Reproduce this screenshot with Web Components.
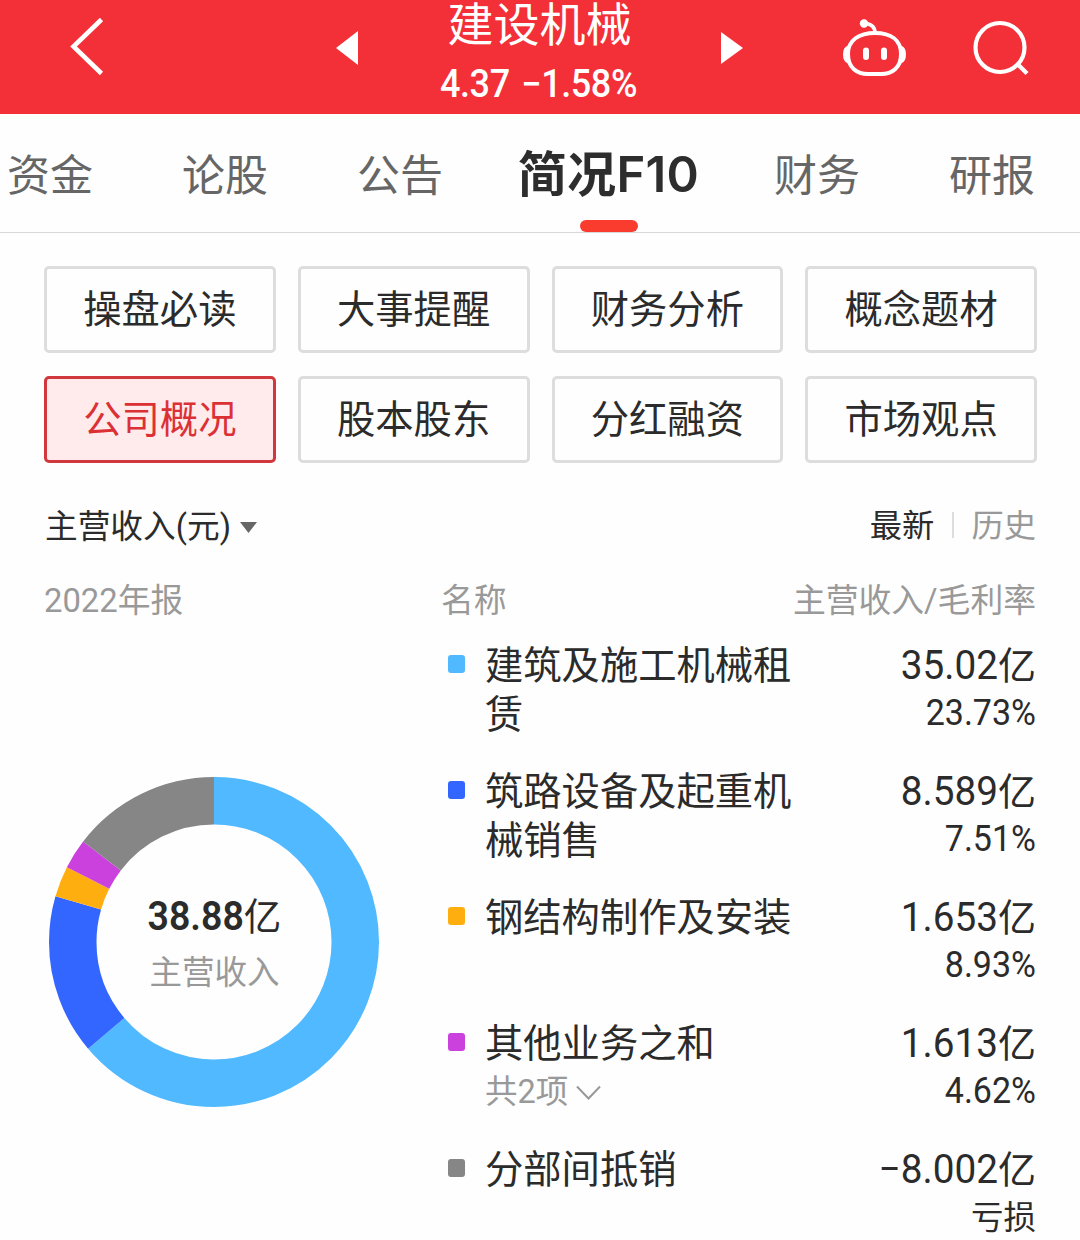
<!DOCTYPE html>
<html lang="zh-CN">
<head>
<meta charset="utf-8">
<title>建设机械 简况F10</title>
<style>
body {
  margin: 0;
  width: 1080px;
  height: 1240px;
  overflow: hidden;
  background: #fefefe;
  color: #2b2b2b;
  font-family: Roboto, "Noto Sans CJK SC", sans-serif;
}
</style>
</head>
<body>
<stock-page></stock-page>

<script>
const segments = [
  { name: "建筑及施工机械租赁", value: 35.02, amount: "35.02", ratio: "23.73%", color: "#51b9ff" },
  { name: "筑路设备及起重机械销售", value: 8.589, amount: "8.589", ratio: "7.51%", color: "#3366ff" },
  { name: "钢结构制作及安装", value: 1.653, amount: "1.653", ratio: "8.93%", color: "#ffae10" },
  { name: "其他业务之和", value: 1.613, amount: "1.613", ratio: "4.62%", color: "#cb41dd", more: "共2项" },
  { name: "分部间抵销", value: 8.002, amount: "−8.002", ratio: "亏损", color: "#868686" },
];

class BaseElement extends HTMLElement {
  constructor() {
    super();
    this.attachShadow({ mode: "open" });
  }

  connectedCallback() {
    this.shadowRoot.innerHTML = this.template();
  }
}

// 顶部标题栏
class StockHeader extends BaseElement {
  template() {
    return `
<style>
:host {
  display: grid;
  grid-template-columns: 336px 407px 337px;
  height: 114px;
  background: #f33038;
  color: #fff;
}
svg {
  display: block;
  fill: none;
  stroke: #fff;
}
.left { padding: 16px 0 0 68px; }
.center {
  display: flex;
  justify-content: space-between;
}
.arrow {
  margin-top: 31px;
  fill: #fff;
  stroke: none;
}
.info {
  text-align: center;
  white-space: nowrap;
}
.name {
  font-size: 46px;
  line-height: 50px;
  height: 60px;
}
.price {
  font-size: 36px;
  font-weight: 500;
  line-height: 48px;
  letter-spacing: -.400px;
  word-spacing: 3px;
  transform: translateX(-1px) scaleY(1.060);
}
.right {
  display: flex;
  gap: 63px;
  padding: 16px 0 0 97px;
}
</style>
<div class="left">
  <svg width="38" height="62" stroke-width="4.600"><path d="M33.500 3.500 5.500 30.500 33.500 57.500"/></svg>
</div>
<div class="center">
  <svg class="arrow" width="22" height="34"><path d="M22 0v34L0 17z"/></svg>
  <div class="info">
    <div class="name"><slot name="name"></slot></div>
    <div class="price"><slot name="price"></slot></div>
  </div>
  <svg class="arrow" width="22" height="34"><path d="M0 1v32l22-16z"/></svg>
</div>
<div class="right">
  <svg width="70" height="64" stroke-width="4">
    <path d="M35 17c16 0 26 7 26 21s-9 20-20 20H28C17 58 8 52 8 38s11-21 27-21z"/>
    <path d="M35 17c0-6-3-9-10-9.500" stroke-width="3.600"/>
    <circle cx="24" cy="7.500" r="4.200" fill="#fff" stroke="none"/>
    <path d="M8 31c-5 2-5 13 0 15zM61 31c5 2 5 13 0 15z" fill="#fff" stroke-width="2.500"/>
    <path d="M26 34.500v6.500M44 34.500v6.500" stroke-width="6" stroke-linecap="round"/>
  </svg>
  <svg width="62" height="62" stroke-width="4.200"><circle cx="27" cy="31.500" r="24.500"/><path d="M43.500 47 54 57.500"/></svg>
</div>`;
  }
}

// 导航页签
class TabItem extends BaseElement {
  template() {
    return `
<style>
:host {
  display: flex;
  position: relative;
  align-items: center;
  height: 115px;
  font-size: 43px;
  color: #666;
  white-space: nowrap;
}
:host([active]) {
  justify-content: center;
  box-sizing: border-box;
  width: 182px;
  height: 118px;
  margin: 0 -14.500px;
  padding-bottom: 5px;
  font-family: Inter, "Noto Sans CJK SC", sans-serif;
  font-size: 49px;
  font-weight: 600;
  letter-spacing: .300px;
  color: #2d2d2d;
}
:host([active])::after {
  content: "";
  position: absolute;
  left: 50%;
  bottom: 0;
  width: 58px;
  height: 12px;
  margin-left: -29px;
  border-radius: 6px;
  background: #fa3c2f;
}
</style>
<span><slot></slot></span>`;
  }
}

class TabBar extends BaseElement {
  template() {
    return `
<style>
:host {
  display: flex;
  gap: 89px;
  height: 118px;
  padding-left: 7px;
  border-bottom: 1px solid #d8d8d8;
}
</style>
<slot></slot>`;
  }
}

class MenuButton extends BaseElement {
  template() {
    return `
<style>
:host {
  display: flex;
  box-sizing: border-box;
  align-items: center;
  justify-content: center;
  height: 87px;
  padding-bottom: 6px;
  border: 3px solid #ddd;
  border-radius: 5px;
  font-size: 38.300px;
}
:host([active]) {
  border-color: #d0383e;
  background: #ffebeb;
  color: #db3136;
}
</style>
<slot></slot>`;
  }
}

class MenuGrid extends BaseElement {
  template() {
    return `
<style>
:host {
  display: grid;
  grid-template-columns: repeat(4, 1fr);
  gap: 23px 22px;
  padding: 33px 43px 0 44px;
}
</style>
<slot></slot>`;
  }
}

class SectionTitle extends BaseElement {
  template() {
    return `
<style>
:host {
  display: flex;
  align-items: center;
  height: 50px;
  margin: 35px 44px 0 45px;
  font-size: 32.700px;
}
.caret {
  margin: 8px auto 0 9px;
  fill: #666;
}
i {
  width: 2px;
  height: 26px;
  margin: 4px 17px 0 18px;
  background: #ddd;
}
span { font-size: 32.300px; }
.off { color: #999; }
</style>
<slot></slot>
<svg class="caret" width="17" height="11"><path d="M0 0h17L8.500 11z"/></svg>
<span>最新</span><i></i><span class="off">历史</span>`;
  }
}

// 环形图
class DonutChart extends BaseElement {
  template() {
    const total = segments.reduce((sum, item) => sum + item.value, 0);
    let start = 0;
    const arcs = segments.map((item) => {
      const size = (item.value / total) * 100;
      const arc = `<circle cx="165" cy="165" r="141.250" pathLength="100" stroke="${item.color}" stroke-dasharray="${size} ${100 - size}" stroke-dashoffset="${-start}"/>`;
      start += size;
      return arc;
    }).join("");
    return `
<style>
:host {
  display: grid;
  width: 330px;
  height: 330px;
}
svg, .label { grid-area: 1 / 1; }
svg {
  transform: rotate(-90deg);
  fill: none;
  stroke-width: 47.500px;
}
.label {
  padding-top: 113px;
  text-align: center;
}
.total {
  font-size: 37.500px;
  line-height: 54px;
}
b {
  display: inline-block;
  font-size: 37.500px;
  font-weight: 600;
  transform: translateY(-1px) scaleY(1.060);
}
.desc {
  font-size: 32.500px;
  line-height: 58px;
  color: #999;
}
</style>
<svg width="330" height="330">${arcs}</svg>
<div class="label">
  <div class="total"><b>38.88</b>亿</div>
  <div class="desc">主营收入</div>
</div>`;
  }
}

class IncomeRow extends BaseElement {
  template() {
    const item = segments[this.getAttribute("index")];
    const more = item.more ? `
<div class="more">${item.more}<svg width="25" height="15"><path d="M1 1.500 12.500 13.500 24 1.500"/></svg></div>` : "";
    return `
<style>
:host {
  display: grid;
  grid-template-columns: 37px 310px 1fr;
  height: 125.900px;
}
.mark {
  width: 17px;
  height: 18px;
  margin-top: 14px;
  border-radius: 3px;
  background: ${item.color};
}
.name {
  font-size: 38.300px;
  line-height: 49px;
}
.more {
  display: flex;
  align-items: center;
  gap: 8px;
  font-size: 32.500px;
  color: #999;
}
svg {
  fill: none;
  stroke: #999;
  stroke-width: 2;
}
.value {
  text-align: right;
  white-space: nowrap;
}
.amount {
  font-size: 38px;
  line-height: 49px;
}
.amount span {
  display: inline-block;
  font-size: 38.700px;
  transform: translateY(-1px) scaleY(1.070);
}
.ratio {
  font-size: 32.500px;
  line-height: 47px;
}
.ratio.num {
  font-size: 34px;
  transform: translateY(-1.500px) scaleY(1.080);
}
</style>
<div class="mark"></div>
<div class="name">${item.name}${more}</div>
<div class="value">
  <div class="amount"><span>${item.amount}</span>亿</div>
  <div class="ratio ${item.ratio.endsWith("%") ? "num" : ""}">${item.ratio}</div>
</div>`;
  }
}

class IncomePanel extends BaseElement {
  template() {
    return `
<style>
:host {
  display: grid;
  grid-template-columns: 397px 1fr;
  padding: 28px 44px 0 44px;
}
.head {
  display: flex;
  justify-content: space-between;
  height: 50px;
  font-size: 32.800px;
  line-height: 50px;
  color: #999;
}
donut-chart { margin: 151px 0 0 5.400px; }
.rows { padding: 15px 0 0 7px; }
</style>
<div>
  <div class="head">2022年报</div>
  <donut-chart></donut-chart>
</div>
<div>
  <div class="head"><span>名称</span><span>主营收入/毛利率</span></div>
  <div class="rows">${segments.map((_, i) => `<income-row index="${i}"></income-row>`).join("")}</div>
</div>`;
  }
}

class StockPage extends BaseElement {
  template() {
    return `
<style>
:host { display: block; }
</style>
<stock-header>
  <span slot="name">建设机械</span>
  <span slot="price">4.37 −1.58%</span>
</stock-header>
<tab-bar>
  <tab-item>资金</tab-item>
  <tab-item>论股</tab-item>
  <tab-item>公告</tab-item>
  <tab-item active>简况F10</tab-item>
  <tab-item>财务</tab-item>
  <tab-item>研报</tab-item>
</tab-bar>
<menu-grid>
  <menu-button>操盘必读</menu-button>
  <menu-button>大事提醒</menu-button>
  <menu-button>财务分析</menu-button>
  <menu-button>概念题材</menu-button>
  <menu-button active>公司概况</menu-button>
  <menu-button>股本股东</menu-button>
  <menu-button>分红融资</menu-button>
  <menu-button>市场观点</menu-button>
</menu-grid>
<section-title>主营收入(元)</section-title>
<income-panel></income-panel>`;
  }
}

customElements.define("stock-header", StockHeader);
customElements.define("tab-item", TabItem);
customElements.define("tab-bar", TabBar);
customElements.define("menu-button", MenuButton);
customElements.define("menu-grid", MenuGrid);
customElements.define("section-title", SectionTitle);
customElements.define("donut-chart", DonutChart);
customElements.define("income-row", IncomeRow);
customElements.define("income-panel", IncomePanel);
customElements.define("stock-page", StockPage);
</script>
</body>
</html>
